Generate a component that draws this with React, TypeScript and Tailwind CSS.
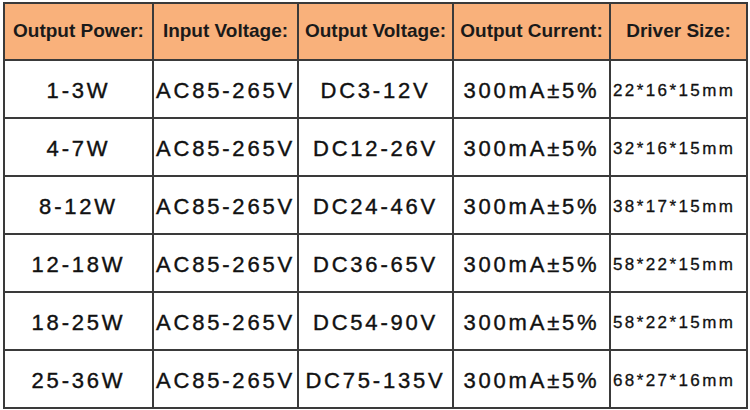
import React from "react";

const rows = [
  ["1-3W", "AC85-265V", "DC3-12V", "300mA±5%", "22*16*15mm"],
  ["4-7W", "AC85-265V", "DC12-26V", "300mA±5%", "32*16*15mm"],
  ["8-12W", "AC85-265V", "DC24-46V", "300mA±5%", "38*17*15mm"],
  ["12-18W", "AC85-265V", "DC36-65V", "300mA±5%", "58*22*15mm"],
  ["18-25W", "AC85-265V", "DC54-90V", "300mA±5%", "58*22*15mm"],
  ["25-36W", "AC85-265V", "DC75-135V", "300mA±5%", "68*27*16mm"],
];

const heads = ["Output Power:", "Input Voltage:", "Output Voltage:", "Output Current:", "Driver Size:"];

export default function App() {
  return (
    <div className="w-[750px] h-[410px] bg-white pl-[3px] pt-[2px] font-['Liberation_Sans',Arial,sans-serif] text-[#111]">
      <table className="table-fixed border-collapse w-[743px]">
        <colgroup>
          <col className="w-[149px]" />
          <col className="w-[145px]" />
          <col className="w-[155px]" />
          <col className="w-[157px]" />
          <col className="w-[137px]" />
        </colgroup>
        <thead>
          <tr className="h-[57px] bg-[#f9b17b]">
            {heads.map((h) => (
              <th key={h} className="border-2 border-[#3a3a3a] p-0 text-center text-[19px] font-bold text-[#1a1a1a] whitespace-nowrap">
                {h}
              </th>
            ))}
          </tr>
        </thead>
        <tbody>
          {rows.map((r, i) => (
            <tr key={i} className="h-[58px]">
              {r.map((c, j) => (
                <td
                  key={j}
                  className={
                    j === 4
                      ? "border-2 border-[#3a3a3a] p-0 pl-[2px] pt-[3px] text-left text-[17px] tracking-[2.4px] whitespace-nowrap [-webkit-text-stroke:0.3px_#111]"
                      : "border-2 border-[#3a3a3a] p-0 pt-[3px] text-center text-[22px] tracking-[2.8px] whitespace-nowrap [-webkit-text-stroke:0.4px_#111]"
                  }
                >
                  {c}
                </td>
              ))}
            </tr>
          ))}
        </tbody>
      </table>
    </div>
  );
}
